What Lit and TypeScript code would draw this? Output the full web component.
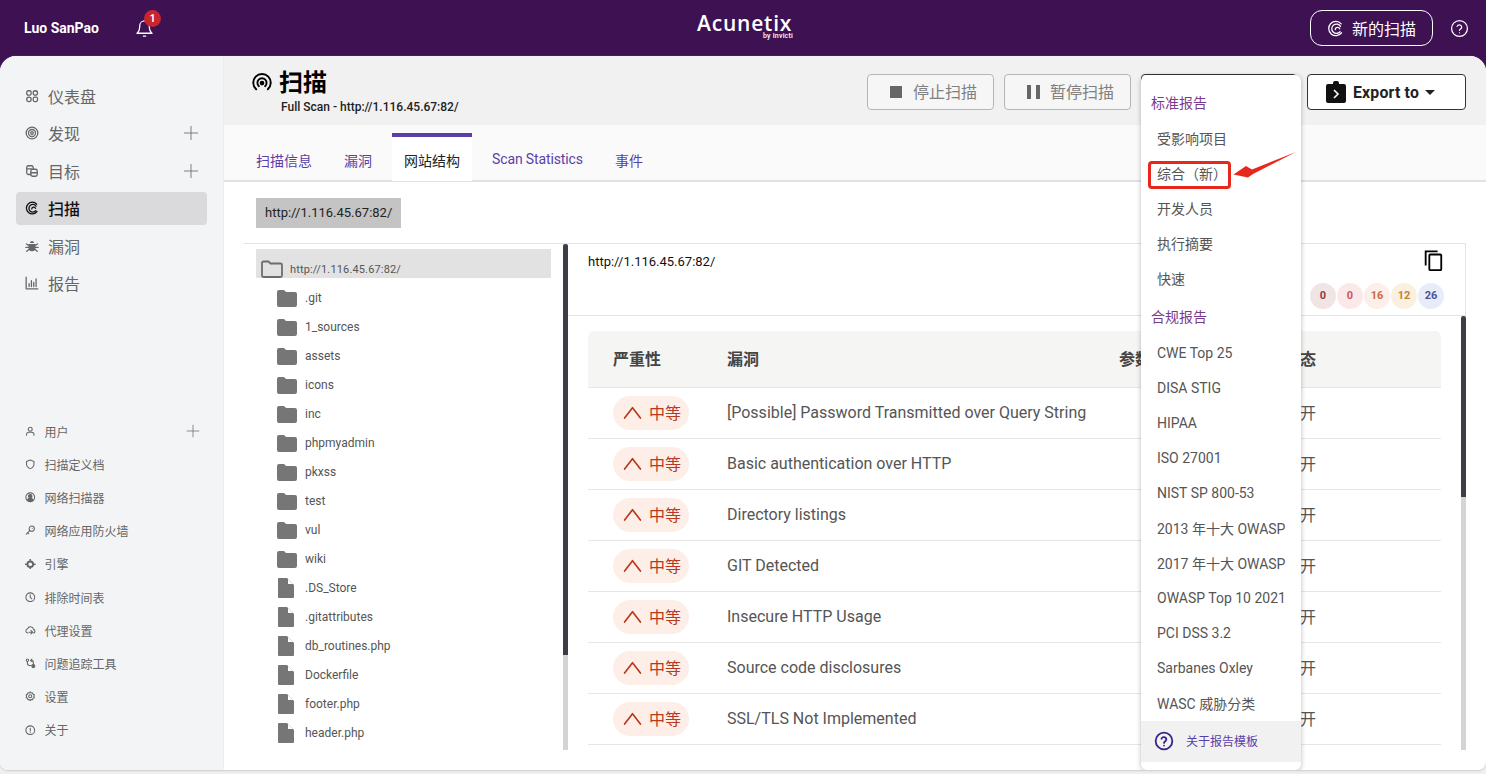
import { LitElement, html, css, svg } from "lit";
import { customElement } from "lit/decorators.js";

const ico = (size: number, body: unknown, cls = "", sw = 2) => html`<svg class=${cls} width=${size} height=${size} viewBox="0 0 24 24" fill="none" stroke="currentColor" stroke-width=${sw} stroke-linecap="round" stroke-linejoin="round">${body}</svg>`;

const P: Record<string, unknown> = {
  dash: svg`<rect x="3" y="3" width="7.5" height="7.5" rx="2.5"/><rect x="14" y="3" width="7.5" height="7.5" rx="3.7"/><rect x="3" y="14" width="7.5" height="7.5" rx="3.7"/><rect x="14" y="14" width="7.5" height="7.5" rx="2.5"/>`,
  discover: svg`<circle cx="12" cy="12" r="10"/><circle cx="12" cy="12" r="6"/><circle cx="12" cy="12" r="2.2"/>`,
  target: svg`<path d="M10 18H6a3 3 0 0 1-3-3V6a3 3 0 0 1 3-3h5a3 3 0 0 1 3 3v3"/><path d="M3 8.5h8"/><rect x="10" y="9" width="11" height="12" rx="3"/><path d="M10 15h11"/>`,
  scan: svg`<path d="M20 5.5A10 10 0 1 0 20.5 18"/><path d="M19 9A6.6 6.6 0 1 0 18.5 16.5"/><path d="M18 12.5a3.4 3.4 0 0 0-6.5 1"/>`,
  bug: svg`<path fill="currentColor" stroke="none" d="M8.5 7a3.5 3.5 0 0 1 7 0zM7 8.5h10a1 1 0 0 1 1 1V15a6 6 0 0 1-12 0V9.500a1 1 0 0 1 1-1z"/><path d="M2.500 8.500 6 10.500M21.500 8.500 18 10.500M1.500 14.500H6M22.500 14.500H18M3 21l3.500-3M21 21l-3.500-3"/>`,
  report: svg`<path d="M2 2v20h20"/><path d="M7 18v-5M11 18V8M15 18v-7M19 18V5"/>`,
  user: svg`<circle cx="12" cy="7.500" r="4.500"/><path d="M3.500 21v-1.500a5 5 0 0 1 5-5h7a5 5 0 0 1 5 5V21"/>`,
  shield: svg`<path d="M12 2.500 20.500 5.500V12c0 5-3.500 8-8.500 10-5-2-8.500-5-8.500-10V5.500z"/>`,
  net: svg`<circle cx="12" cy="12" r="10"/><circle cx="12" cy="9.500" r="4" fill="currentColor"/><path fill="currentColor" d="M5 19c1-3 4-4.500 7-4.500s6 1.500 7 4.500c-2 2-4.500 3-7 3s-5-1-7-3z"/>`,
  key: svg`<circle cx="15.500" cy="8.500" r="6"/><path d="M11 13 3 21v-.5M6 18l2.500 2M16.500 7.500h.01"/>`,
  engine: svg`<circle cx="12" cy="12" r="6.500" stroke-width="4.500"/><path d="M12 1v2M12 21v2M1 12h2M21 12h2" stroke-width="3.500"/>`,
  clock: svg`<circle cx="12" cy="12" r="10"/><path d="M12 6.500V12l3.500 3.500"/>`,
  cloud: svg`<path d="M6.500 18.500A5 5 0 0 1 6 8.600 7 7 0 0 1 19.500 10 4.500 4.500 0 0 1 20 18.500h-1"/><path d="M9 16.500h8M13.500 12.500l4 4-4 4"/>`,
  issue: svg`<circle cx="5.500" cy="5" r="2.800"/><path d="M5.500 8v4a5 5 0 0 0 5 5H14"/><path d="M16 2.500 12.500 5.500 16 8.500M14 5.500h2a3 3 0 0 1 3 3V14"/><circle cx="19" cy="18.500" r="3.500" fill="currentColor"/>`,
  gear: svg`<circle cx="12" cy="12" r="3.500"/><path d="M12 2l2 2.600 3.300-.500 1 3.200 3 1.400-1 3.300 1 3.300-3 1.400-1 3.200-3.300-.500L12 22l-2-2.600-3.300.500-1-3.200-3-1.400 1-3.300-1-3.300 3-1.400 1-3.200 3.300.500z"/>`,
  info: svg`<circle cx="12" cy="12" r="10"/><path d="M12 7.500v6M12 17h.01"/>`,
  radar: svg`<path d="M5 19.500A10.500 10.500 0 1 1 19 19.500"/><path d="M8.300 15.800A5.500 5.500 0 1 1 15.700 15.800"/><circle cx="12" cy="12" r="1.700" fill="currentColor"/>`,
  bell: svg`<path d="M12 2.500a6 6 0 0 1 6 6c0 5 1 7.500 3.500 9.500h-19C5 16 6 13.500 6 8.500a6 6 0 0 1 6-6z"/><path d="M10.500 21.500h3"/>`,
  help: svg`<circle cx="12" cy="12" r="10"/><path d="M9 9.300a3 3 0 0 1 5.800 1c0 2-2.800 2.500-2.800 4"/><path d="M12 17.500h.01"/>`,
  chevron: svg`<path d="M2 19 12 6l10 13"/>`,
  copy: svg`<path d="M4 18V2.500h13" stroke-linecap="butt" stroke-linejoin="miter"/><rect x="8" y="6" width="13" height="17" rx="1"/>`,
  plus: svg`<path d="M12 2v20M2 12h20"/>`,
};

const TOP = [
  ["dash", "仪表盘", 0], ["discover", "发现", 1], ["target", "目标", 1], ["scan", "扫描", 0], ["bug", "漏洞", 0], ["report", "报告", 0],
] as const;
const LOW = [
  ["user", "用户", 1], ["shield", "扫描定义档", 0], ["net", "网络扫描器", 0], ["key", "网络应用防火墙", 0], ["engine", "引擎", 0],
  ["clock", "排除时间表", 0], ["cloud", "代理设置", 0], ["issue", "问题追踪工具", 0], ["gear", "设置", 0], ["info", "关于", 0],
] as const;
const FOLDERS = [".git", "1_sources", "assets", "icons", "inc", "phpmyadmin", "pkxss", "test", "vul", "wiki"];
const FILES = [".DS_Store", ".gitattributes", "db_routines.php", "Dockerfile", "footer.php", "header.php"];
const TABS = ["扫描信息", "漏洞", "网站结构", "Scan Statistics", "事件"];
const BADGES = [["0", "b1"], ["0", "b2"], ["16", "b3"], ["12", "b4"], ["26", "b5"]];
const VULNS = ["[Possible] Password Transmitted over Query String", "Basic authentication over HTTP", "Directory listings", "GIT Detected", "Insecure HTTP Usage", "Source code disclosures", "SSL/TLS Not Implemented"];
const STD = ["受影响项目", "综合（新）", "开发人员", "执行摘要", "快速"];
const COMP = ["CWE Top 25", "DISA STIG", "HIPAA", "ISO 27001", "NIST SP 800-53", "2013 年十大 OWASP", "2017 年十大 OWASP", "OWASP Top 10 2021", "PCI DSS 3.2", "Sarbanes Oxley", "WASC 威胁分类"];

@customElement("app-root")
export class AppRoot extends LitElement {
  static styles = css`
    :host { display: block; height: 774px; overflow: hidden; font-family: Roboto, "Noto Sans CJK SC", sans-serif; color: #555; }
    * { box-sizing: border-box; }
    .app { position: relative; height: 774px; display: flex; flex-direction: column; background: linear-gradient(#3d1152 0 100px, #f0f0f0 100px); }
    .top { height: 56px; flex: none; display: flex; align-items: center; color: #fff; padding: 0 17px 0 24px; position: relative; }
    .who { font-size: 14px; font-weight: 700; width: 111px; }
    .bell { position: relative; display: flex; }
    .dot { position: absolute; left: 9px; top: -9px; width: 17px; height: 17px; border-radius: 50%; background: #c9252c; font: 700 10px/17px Roboto, sans-serif; text-align: center; }
    .logo { position: absolute; left: 697px; top: 13px; width: 96px; text-align: right; }
    .logo b { display: block; font: 600 21px/20px "Open Sans", sans-serif; letter-spacing: .8px; text-align: left; white-space: nowrap; }
    .logo small { display: block; font: 500 7px/7px Roboto, sans-serif; letter-spacing: .2px; }
    .top-r { margin-left: auto; display: flex; align-items: center; gap: 17px; }
    .new { height: 36px; width: 123px; border: 1px solid #fff; border-radius: 12px; display: flex; align-items: center; justify-content: center; gap: 8px; font-size: 16px; }
    .shell { flex: none; height: 714px; display: flex; border-radius: 16px 16px 8px 8px; overflow: hidden; background: #fff; box-shadow: 0 1px 2px #ccc; }
    .side { width: 224px; flex: none; background: #f3f4f6; border-right: 1px solid #eee; display: flex; flex-direction: column; padding: 21px 16px 0; }
    .nav { height: 37.6px; display: flex; align-items: center; padding: 0 9px; font-size: 16px; color: #666; }
    .nav .t { margin-left: 9px; flex: 1; }
    .nav.on { background: #dadadc; color: #111; border-radius: 4px; height: 33px; margin: 2px 0; font-weight: 500; }
    .nav svg { flex: none; }
    .plus { color: #777; margin-right: -1px; }
    .low { margin-top: 112.500px; }
    .low .nav { height: 33.2px; font-size: 12px; }
    .low .nav .t { margin-left: 9px; }
    .low .nav .plus { margin-right: -2px; }
    .main { flex: 1; min-width: 0; display: flex; flex-direction: column; }
    .hd { height: 69px; flex: none; background: #f1f1f1; display: flex; justify-content: space-between; padding: 18px 20px 0 28px; }
    .ttl { display: flex; align-items: center; gap: 7px; font-size: 24px; font-weight: 700; color: #000; line-height: 20px; margin-top: -1px; }
    .sub { font-size: 12px; font-weight: 500; color: #222; margin: 7px 0 0 29px; line-height: 14px; white-space: nowrap; }
    .acts { display: flex; gap: 10px; align-items: flex-start; }
    .btn { height: 36px; width: 127px; border: 1px solid #b5b5b5; border-radius: 4px; background: #f6f6f6; color: #808080; font-size: 16px; display: flex; align-items: center; gap: 10px; padding: 0 0 3px 22px; }
    .btn i { display: block; background: #666; position: relative; top: 1.500px; }
    .stop { width: 12px; height: 12px; margin-right: 1px; }
    .pause { width: 13px; height: 14px; background: linear-gradient(90deg,#666 0 4px,transparent 4px 9px,#666 9px) !important; }
    .wrap { position: relative; width: 156px; }
    .gen { width: 156px; border-color: #333; background: #fff; color: #333; }
    .exp { width: 159px; border-color: #333; background: #fff; color: #222; font-weight: 700; font-size: 15.800px; border-radius: 4px; gap: 7px; padding: 0 0 0 18px; letter-spacing: .2px; }
    .caret { width: 0; height: 0; border: 5.500px solid transparent; border-top-color: #222; border-bottom: 0; margin-left: -1px; }
    .menu { position: absolute; left: 0; top: 1px; width: 160px; height: 695px; background: #fff; border-radius: 6px; box-shadow: 0 1px 5px rgba(0,0,0,.28); padding-top: 10px; z-index: 5; color: #555; font-size: 14px; display: flex; flex-direction: column; }
    .mh { height: 36px; flex: none; padding: 0 0 2px 10px; display: flex; align-items: center; color: #7a3b8f; font-size: 14px; }
    .mh.two { margin-top: 3px; }
    .mi { height: 35px; flex: none; padding-left: 16px; display: flex; align-items: center; white-space: nowrap; font-size: 14px; }
    .mi.cn { padding-bottom: 2px; }
    .mf { height: 41px; flex: none; background: #f1f1f1; display: flex; align-items: center; padding: 0 0 0 13px; gap: 12px; color: #5a3fa8; font-size: 12px; margin-top: .5px; }
    .mf span { position: relative; top: -1px; }
    .mf svg { color: #3b2488; }
    .tabs { height: 57px; flex: none; background: #fafafa; border-bottom: 2px solid #e1e1e6; display: flex; gap: 8px; padding: 8px 0 0 20px; }
    .tab { padding: 7px 12px 0; height: 47px; display: flex; align-items: center; font-size: 14px; color: #5a3fa8; white-space: nowrap; }
    .tab.lat { letter-spacing: -.12px; padding-top: 5px; }
    .tab.on { background: #fff; border-top: 4px solid #5b3fa8; color: #222; padding-top: 2px; height: 48px; }
    .crumbs { height: 61px; flex: none; padding: 16px 0 0 32px; }
    .chip { display: inline-block; height: 30px; line-height: 30px; padding: 0 9px; background: #c4c4c4; color: #222; font-size: 13px; }
    .panes { height: 507px; flex: none; margin: 0 20px; border-top: 1px solid #e4e4e4; display: flex; overflow: hidden; }
    .tree { width: 319px; flex: none; padding: 5px 12px 0; overflow: hidden; }
    .root { height: 29px; background: #e2e2e2; display: flex; align-items: flex-end; padding: 0 0 0 5px; gap: 7px; font-size: 11px; color: #555; letter-spacing: .15px; }
    .root span { padding-bottom: 2px; }
    .nodes { padding: 5px 0 0 21px; }
    .node { height: 29px; display: flex; align-items: center; gap: 8px; font-size: 12px; color: #555; }
    .node svg { flex: none; }
    .bar { width: 5px; flex: none; background: #d4d4d4; }
    .thumb { background: #3d3d47; border-radius: 3px 3px 0 0; }
    .th1 { height: 411px; }
    .th2 { height: 181px; }
    .det { flex: 1; min-width: 0; display: flex; flex-direction: column; border-right: 1px solid #e4e4e4; }
    .dh { height: 72px; flex: none; border-bottom: 1px solid #e4e4e4; padding: 10px 21px 0 20px; position: relative; display: flex; justify-content: space-between; }
    .url { font-size: 13px; color: #111; line-height: 16px; }
    .dhr { display: flex; flex-direction: column; align-items: flex-end; gap: 12.500px; margin-top: -5.500px; }
    .copy { color: #000; }
    .badges { display: flex; gap: 1px; }
    .bd { width: 26px; height: 26px; border-radius: 50%; text-align: center; font: 700 11px/26px Roboto, sans-serif; }
    .b1 { background: #f1e4e4; color: #8e3c3f; }
    .b2 { background: #fbe9e9; color: #d2555b; }
    .b3 { background: #fceee8; color: #c9694a; }
    .b4 { background: #f9f0e0; color: #c4813c; }
    .b5 { background: #e8ebf8; color: #4a5599; }
    .dbody { flex: 1; min-height: 0; display: flex; margin-right: -1px; }
    .tw { flex: 1; min-width: 0; padding: 15px 20px 0; overflow: hidden; }
    .row { display: grid; grid-template-columns: 114px 392px 165px 1fr; padding-left: 25px; height: 51px; align-items: center; border-bottom: 1px solid #e6e6e6; font-size: 16px; color: #555; }
    .row > span { position: relative; top: -1px; }
    .row.h { height: 57px; background: #f5f5f3; border-radius: 6px 6px 0 0; font-weight: 700; color: #444; }
    .pill { width: 76px; height: 34px; border-radius: 17px; background: #fdeee8; color: #b8391c; display: flex; align-items: center; padding-left: 10px; gap: 7px; font-size: 16px; position: relative; top: -.5px; }
    .pill span { position: relative; top: -1px; }
    .note { position: absolute; left: 0; top: 0; width: 1486px; height: 774px; pointer-events: none; z-index: 9; }
    .hit { position: absolute; left: 1148px; top: 161px; width: 83px; height: 28px; border: 3px solid #e8281c; border-radius: 4px; z-index: 9; }
  `;

  render() {
    const folder = html`<svg width="20" height="18" viewBox="0 0 20 18"><path fill="#767676" d="M0 3a2 2 0 0 1 2-2h5l2 2h9a2 2 0 0 1 2 2v11a2 2 0 0 1-2 2H2a2 2 0 0 1-2-2z"/></svg>`;
    const file = html`<svg width="20" height="20" viewBox="0 0 20 20"><path fill="#767676" d="M1 1a1 1 0 0 1 1-1h8l7 7v12a1 1 0 0 1-1 1H2a1 1 0 0 1-1-1z"/><path fill="#fff" d="M11 1 16 6h-5z"/></svg>`;
    return html`<div class="app">
      <header class="top">
        <div class="who">Luo SanPao</div>
        <div class="bell">${ico(19, P.bell, "", 1.6)}<span class="dot">1</span></div>
        <div class="logo"><b>Acunetix</b><small>by Invicti</small></div>
        <div class="top-r">
          <div class="new">${ico(17, P.scan, "", 1.8)}<span>新的扫描</span></div>
          ${ico(19, P.help, "", 1.6)}
        </div>
      </header>
      <div class="shell">
        <aside class="side">
          ${TOP.map(([i, t, p]) => html`<div class="nav ${t === "扫描" ? "on" : ""}">${ico(14, P[i], "", 2.2)}<span class="t">${t}</span>${p ? ico(16, P.plus, "plus", 1.400) : ""}</div>`)}
          <div class="low">
            ${LOW.map(([i, t, p]) => html`<div class="nav">${ico(10.500, P[i], "", 2.4)}<span class="t">${t}</span>${p ? ico(14, P.plus, "plus", 1.400) : ""}</div>`)}
          </div>
        </aside>
        <main class="main">
          <div class="hd">
            <div>
              <div class="ttl">${ico(20, P.radar, "", 2.3)}<span>扫描</span></div>
              <div class="sub">Full Scan - http://1.116.45.67:82/</div>
            </div>
            <div class="acts">
              <div class="btn"><i class="stop"></i>停止扫描</div>
              <div class="btn"><i class="pause"></i>暂停扫描</div>
              <div class="wrap">
                <div class="btn gen"></div>
                <div class="menu">
                  <div class="mh">标准报告</div>
                  ${STD.map((t) => html`<div class="mi cn">${t}</div>`)}
                  <div class="mh two">合规报告</div>
                  ${COMP.map((t) => html`<div class="mi">${t}</div>`)}
                  <div class="mf">${ico(20, P.help, "", 2.2)}<span>关于报告模板</span></div>
                </div>
              </div>
              <div class="btn exp">
                <svg width="20" height="22" viewBox="0 0 20 22"><path fill="#111" d="M7 3V2a2 2 0 0 1 2-2h2a2 2 0 0 1 2 2v1h5a2 2 0 0 1 2 2v15a2 2 0 0 1-2 2H2a2 2 0 0 1-2-2V5a2 2 0 0 1 2-2z"/><path fill="none" stroke="#fff" stroke-width="1.600" d="M8 9l4 4-4 4"/></svg>
                <span>Export to</span><span class="caret"></span>
              </div>
            </div>
          </div>
          <nav class="tabs">
            ${TABS.map((t) => html`<div class="tab ${t === "网站结构" ? "on" : ""} ${t.startsWith("Scan") ? "lat" : ""}">${t}</div>`)}
          </nav>
          <div class="crumbs"><span class="chip">http://1.116.45.67:82/</span></div>
          <section class="panes">
            <div class="tree">
              <div class="root">
                <svg width="22" height="18" viewBox="0 0 22 18"><path fill="none" stroke="#6d6d6d" stroke-width="1.800" d="M1 3a1.500 1.500 0 0 1 1.500-1.500h5l2 2h10A1.500 1.500 0 0 1 21 5v10.500a1.500 1.500 0 0 1-1.500 1.500h-17A1.500 1.500 0 0 1 1 15.500z"/></svg>
                <span>http://1.116.45.67:82/</span>
              </div>
              <div class="nodes">
                ${FOLDERS.map((f) => html`<div class="node">${folder}<span>${f}</span></div>`)}
                ${FILES.map((f) => html`<div class="node">${file}<span>${f}</span></div>`)}
              </div>
            </div>
            <div class="bar"><div class="thumb th1"></div></div>
            <div class="det">
              <div class="dh">
                <div class="url">http://1.116.45.67:82/</div>
                <div class="dhr">
                  ${ico(22, P.copy, "copy", 2)}
                  <div class="badges">${BADGES.map(([n, c]) => html`<div class="bd ${c}">${n}</div>`)}</div>
                </div>
              </div>
              <div class="dbody">
                <div class="tw">
                  <div class="row h"><span>严重性</span><span>漏洞</span><span>参数</span><span>状态</span></div>
                  ${VULNS.map((v) => html`<div class="row">
                    <div class="pill">${ico(19, P.chevron, "", 2.1)}<span>中等</span></div>
                    <span>${v}</span><span></span><span>打开</span>
                  </div>`)}
                </div>
                <div class="bar"><div class="thumb th2"></div></div>
              </div>
            </div>
          </section>
        </main>
      </div>
      <div class="hit"></div>
      <svg class="note" viewBox="0 0 1486 774"><polygon fill="#e8281c" points="1296,152 1252,169.500 1246,166 1233.500,174.500 1248,177.500 1253,174"/></svg>
    </div>`;
  }
}
